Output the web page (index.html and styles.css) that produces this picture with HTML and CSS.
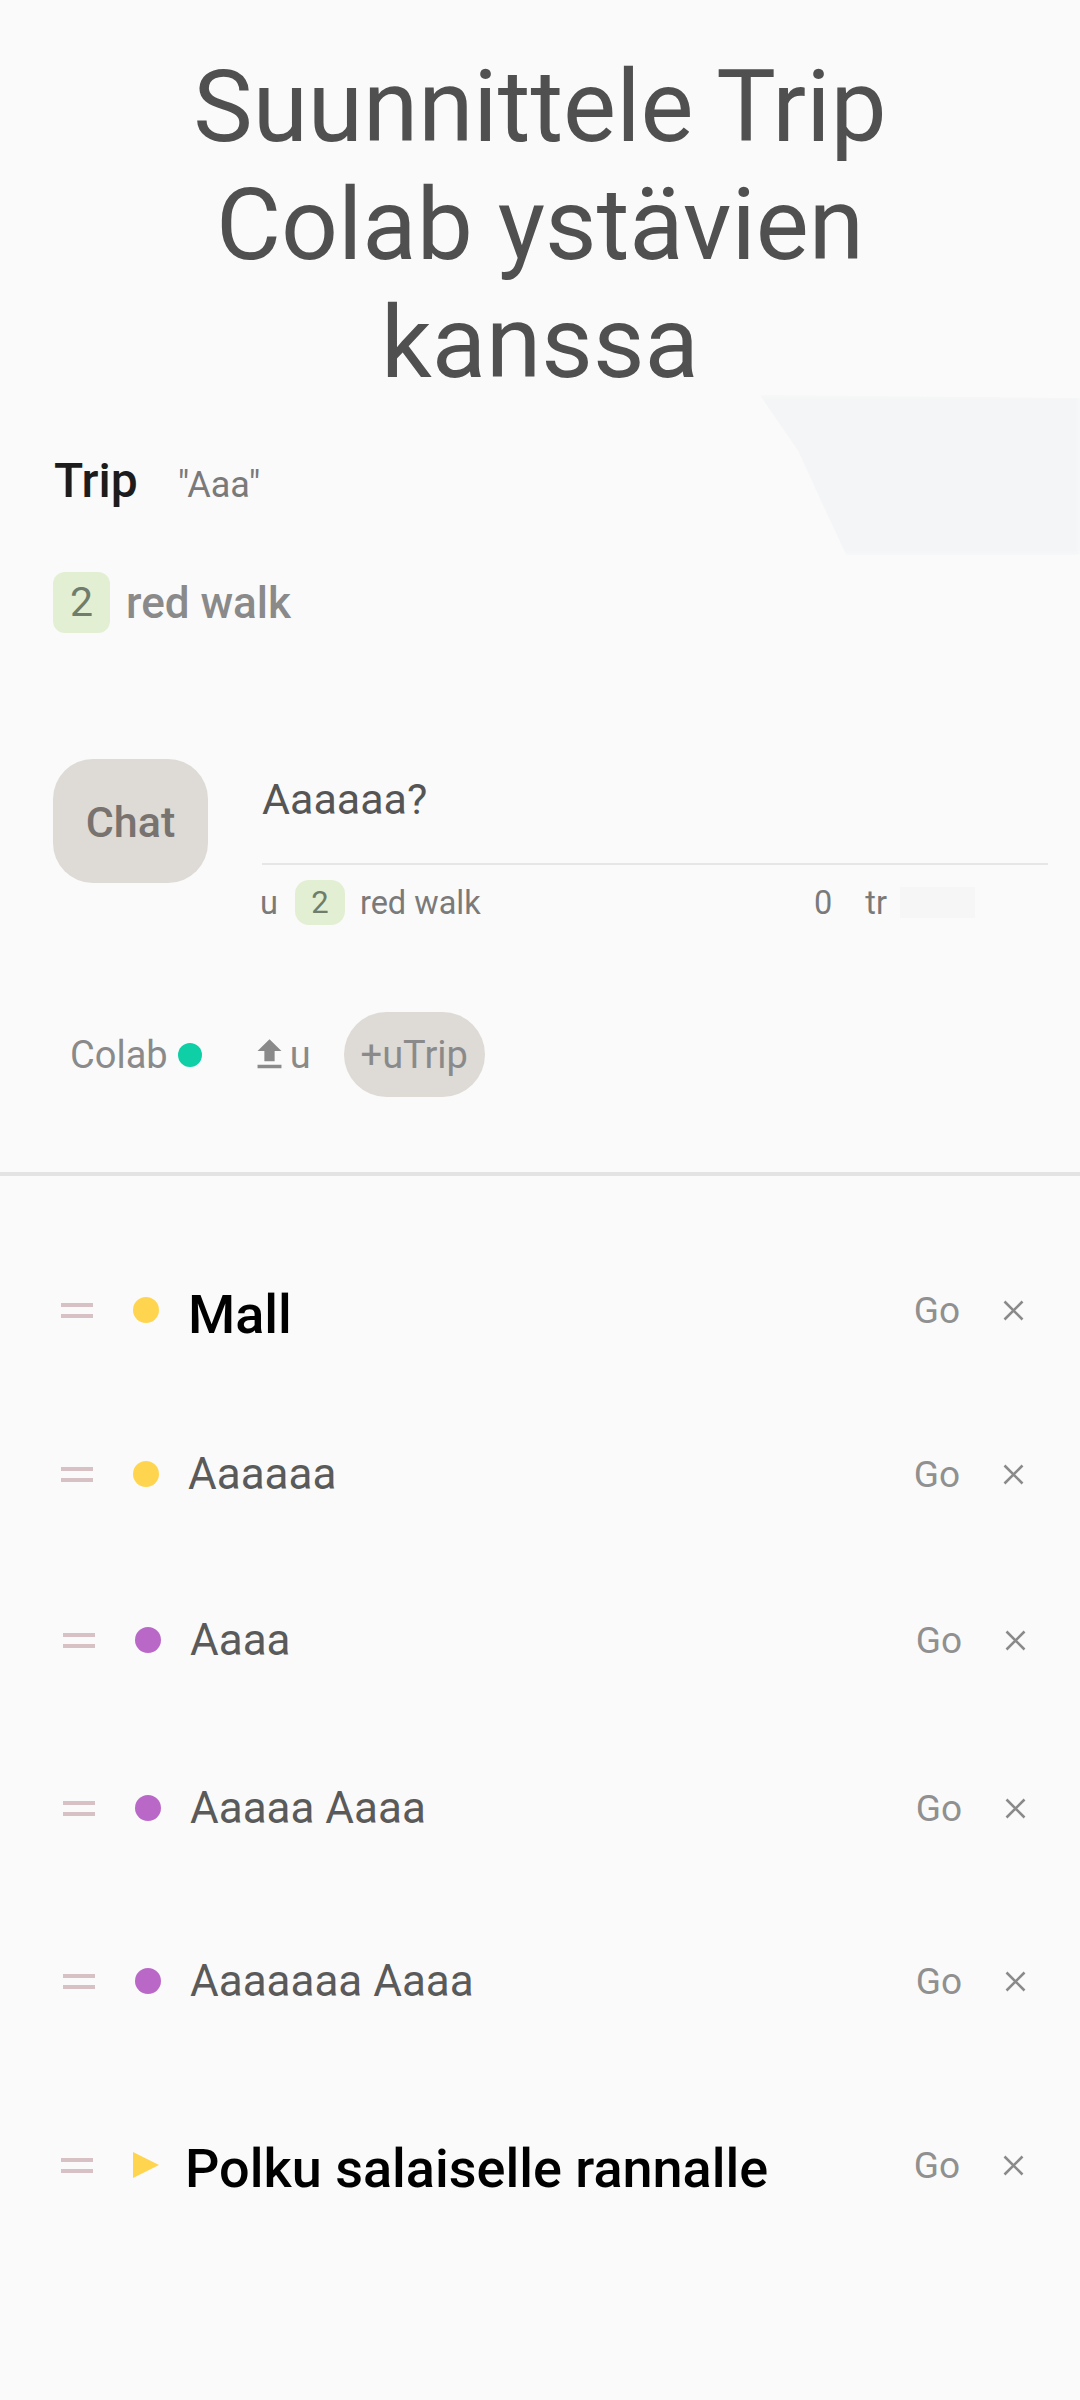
FILE: index.html
```html
<!DOCTYPE html>
<html lang="fi">
<head>
<meta charset="utf-8">
<title>Trip Colab</title>
<link rel="stylesheet" href="styles.css">
</head>
<body>
<div class="page">
  <div class="blob"></div>
  <h1 class="title">Suunnittele Trip Colab ystävien kanssa</h1>

  <div class="trip-row">
    <span class="trip-label">Trip</span>
    <span class="trip-quote">"Aaa"</span>
  </div>

  <div class="walk-row">
    <span class="badge">2</span>
    <span class="walk-text">red walk</span>
  </div>

  <div class="chat">
    <div class="chat-btn">Chat</div>
    <div class="chat-col">
      <div class="chat-input">Aaaaaa?</div>
      <div class="meta">
        <span class="meta-u">u</span>
        <span class="badge badge-sm">2</span>
        <span class="meta-walk">red walk</span>
        <span class="meta-zero">0</span>
        <span class="meta-tr">tr</span>
        <span class="meta-box"></span>
      </div>
    </div>
  </div>

  <div class="colab-row">
    <span class="colab">Colab</span>
    <span class="teal-dot"></span>
    <svg class="upload" viewBox="0 0 24 24" width="41" height="41"><path d="M9 16h6v-6h4l-7-7-7 7h4zm-4 2h14v2H5z" fill="#8a8a8a"/></svg>
    <span class="upload-u">u</span>
    <span class="pill">+uTrip</span>
  </div>

  <div class="divider"></div>

  <ul class="list">
    <li class="row">
      <span class="handle"><i></i><i></i></span>
      <span class="dot dot-yellow"></span>
      <span class="name name-bold">Mall</span>
      <span class="go">Go</span>
      <svg class="close" viewBox="0 0 21 21" width="21" height="21"><path d="M1.5 1.5L19.5 19.5M19.5 1.5L1.5 19.5" stroke="#8a8a8a" stroke-width="2.6"/></svg>
    </li>
    <li class="row">
      <span class="handle"><i></i><i></i></span>
      <span class="dot dot-yellow"></span>
      <span class="name">Aaaaaa</span>
      <span class="go">Go</span>
      <svg class="close" viewBox="0 0 21 21" width="21" height="21"><path d="M1.5 1.5L19.5 19.5M19.5 1.5L1.5 19.5" stroke="#8a8a8a" stroke-width="2.6"/></svg>
    </li>
    <li class="row shift">
      <span class="handle"><i></i><i></i></span>
      <span class="dot dot-purple"></span>
      <span class="name">Aaaa</span>
      <span class="go">Go</span>
      <svg class="close" viewBox="0 0 21 21" width="21" height="21"><path d="M1.5 1.5L19.5 19.5M19.5 1.5L1.5 19.5" stroke="#8a8a8a" stroke-width="2.6"/></svg>
    </li>
    <li class="row shift">
      <span class="handle"><i></i><i></i></span>
      <span class="dot dot-purple"></span>
      <span class="name">Aaaaa Aaaa</span>
      <span class="go">Go</span>
      <svg class="close" viewBox="0 0 21 21" width="21" height="21"><path d="M1.5 1.5L19.5 19.5M19.5 1.5L1.5 19.5" stroke="#8a8a8a" stroke-width="2.6"/></svg>
    </li>
    <li class="row shift">
      <span class="handle"><i></i><i></i></span>
      <span class="dot dot-purple"></span>
      <span class="name">Aaaaaaa Aaaa</span>
      <span class="go">Go</span>
      <svg class="close" viewBox="0 0 21 21" width="21" height="21"><path d="M1.5 1.5L19.5 19.5M19.5 1.5L1.5 19.5" stroke="#8a8a8a" stroke-width="2.6"/></svg>
    </li>
    <li class="row">
      <span class="handle"><i></i><i></i></span>
      <svg class="tri" viewBox="0 0 26 26" width="26" height="26"><path d="M0 0L26 13L0 26Z" fill="#ffd54f"/></svg>
      <span class="name name-bold name-polku">Polku salaiselle rannalle</span>
      <span class="go">Go</span>
      <svg class="close" viewBox="0 0 21 21" width="21" height="21"><path d="M1.5 1.5L19.5 19.5M19.5 1.5L1.5 19.5" stroke="#8a8a8a" stroke-width="2.6"/></svg>
    </li>
  </ul>
</div>
</body>
</html>
```
FILE: styles.css
```css
* { box-sizing: border-box; }
html, body {
  margin: 0;
  padding: 0;
  background: #fafafa;
}
body {
  font-family: Roboto, "Noto Sans", "Liberation Sans", sans-serif;
  width: 1080px;
  min-height: 2400px;
}
.page {
  position: relative;
  width: 1080px;
  min-height: 2400px;
  overflow: hidden;
}
.blob {
  position: absolute;
  left: 760px;
  top: 395px;
  width: 320px;
  height: 160px;
  background: #f4f5f6;
  clip-path: polygon(0 0, 100% 2%, 100% 100%, 27% 100%, 20% 70%, 12% 35%);
  filter: blur(2px);
  z-index: 0;
}
.title {
  position: relative;
  margin: 0 auto;
  padding-top: 48px;
  max-width: 800px;
  font-size: 100px;
  line-height: 118px;
  font-weight: 400;
  color: #505050;
  text-align: center;
}
.trip-row {
  position: relative;
  display: flex;
  align-items: baseline;
  gap: 40px;
  margin-top: 51px;
  padding-left: 54px;
  height: 56px;
}
.trip-label {
  font-size: 48px;
  line-height: 56px;
  font-weight: 500;
  color: #1c1c1c;
}
.trip-quote {
  font-size: 36px;
  color: #7a7a7a;
}
.walk-row {
  display: flex;
  align-items: center;
  gap: 16px;
  margin-top: 63px;
  padding-left: 53px;
  height: 61px;
}
.badge {
  display: inline-flex;
  align-items: center;
  justify-content: center;
  width: 57px;
  height: 61px;
  border-radius: 12px;
  background: #e2efd3;
  color: #6f7d6a;
  font-size: 41px;
  line-height: 61px;
}
.walk-text {
  font-size: 44px;
  font-weight: 500;
  color: #8a8a8a;
}
.chat {
  display: flex;
  align-items: flex-start;
  gap: 54px;
  margin-top: 126px;
  padding: 0 32px 0 53px;
}
.chat-btn {
  flex: none;
  width: 155px;
  height: 124px;
  border-radius: 40px;
  background: #dedad6;
  color: #78736f;
  font-size: 43px;
  font-weight: 500;
  display: flex;
  align-items: center;
  justify-content: center;
  padding-top: 2px;
}
.chat-col {
  flex: 1;
  display: flex;
  flex-direction: column;
}
.chat-input {
  padding: 15px 0 39px;
  font-size: 43px;
  color: #555;
  border-bottom: 2px solid #e6e6e6;
}
.meta {
  display: flex;
  align-items: center;
  margin-top: 15px;
  height: 45px;
  padding-right: 73px;
  font-size: 32.5px;
  color: #7a7a7a;
}
.meta-u { margin-left: -2px; }
.badge-sm {
  width: 50px;
  height: 45px;
  border-radius: 14px;
  font-size: 31px;
  line-height: 45px;
  margin-left: 17px;
}
.meta-walk { margin-left: 15px; }
.meta-zero { margin-left: auto; }
.meta-tr { margin-left: 33px; }
.meta-box {
  margin-left: 13px;
  width: 75px;
  height: 31px;
  background: #f6f6f6;
}
.colab-row {
  display: flex;
  align-items: center;
  margin-top: 87px;
  padding-left: 70px;
  height: 85px;
  font-size: 38px;
  color: #8a8a8a;
}
.teal-dot {
  width: 24px;
  height: 24px;
  border-radius: 50%;
  background: #0fcfa6;
  margin-left: 10px;
}
.upload {
  display: block;
  margin-left: 47px;
}
.upload-u { margin-left: 0; }
.pill {
  margin-left: 33px;
  height: 85px;
  padding: 0 17px;
  border-radius: 43px;
  background: #dedad6;
  color: #8a8a8a;
  display: flex;
  align-items: center;
}
.divider {
  margin-top: 75px;
  height: 4px;
  background: #e3e3e3;
}
.list {
  list-style: none;
  margin: 52px 0 0;
  padding: 0;
}
.row {
  display: flex;
  align-items: center;
  height: 164px;
  padding: 0 56px 0 61px;
}
.row:nth-child(3), .row:nth-child(4) { height: 168px; }
.row:nth-child(5) { height: 178px; }
.row:nth-child(6) { height: 190px; }
.row.shift { padding-left: 63px; padding-right: 54px; }
.handle {
  flex: none;
  width: 32px;
  display: flex;
  flex-direction: column;
  gap: 7px;
}
.handle i {
  display: block;
  height: 4px;
  background: #d8c1c4;
}
.dot {
  flex: none;
  width: 26px;
  height: 26px;
  border-radius: 50%;
  margin-left: 40px;
}
.dot-yellow { background: #ffd54f; }
.dot-purple { background: #ba68c8; }
.tri {
  flex: none;
  display: block;
  margin-left: 40px;
}
.name {
  flex: 1;
  margin-left: 29px;
  font-size: 44px;
  color: #5a5a5a;
}
.name-bold {
  font-size: 54px;
  font-weight: 500;
  color: #000;
  padding-top: 9px;
}
.name-polku { margin-left: 26px; padding-top: 6px; }
.go {
  font-size: 37px;
  color: #909090;
}
.close {
  display: block;
  margin-left: 43px;
}
```
